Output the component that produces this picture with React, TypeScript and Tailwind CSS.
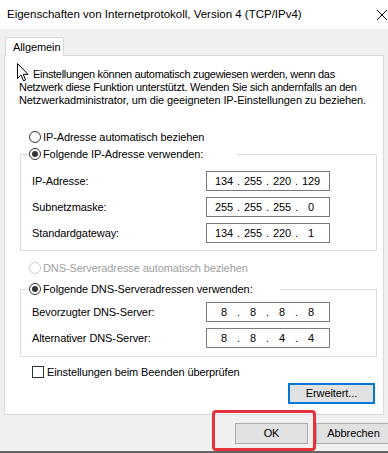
import React from 'react';

const Radio: React.FC<{ checked?: boolean; disabled?: boolean }> = ({ checked, disabled }) => (
  <span
    className={`flex h-[12px] w-[12px] shrink-0 items-center justify-center rounded-full border bg-white ${
      disabled ? 'border-[#cccccc]' : 'border-[#333333]'
    }`}
  >
    {checked && <span className="h-[6px] w-[6px] rounded-full bg-[#333333]" />}
  </span>
);

const IpBox: React.FC<{ parts: string[] }> = ({ parts }) => (
  <div className="flex h-[20px] w-[124px] items-center border border-[#7a7a7a] bg-white pl-[7px]">
    {parts.map((p, i) => (
      <React.Fragment key={i}>
        {i > 0 && <span className="w-[9px] text-center">.</span>}
        <span className="w-[20px] text-center">{p}</span>
      </React.Fragment>
    ))}
  </div>
);

const FieldRow: React.FC<{ label: string; parts: string[] }> = ({ label, parts }) => (
  <div className="flex items-center">
    <span className="w-[174px]">{label}</span>
    <IpBox parts={parts} />
  </div>
);

const Cursor = () => (
  <svg width="12" height="19" viewBox="0 0 12 19" className="absolute left-[12px] top-[7px]">
    <path d="M0.5 0.5 L0.5 15.5 L4 12 L6.5 17.8 L8.6 16.9 L6.2 11.3 L11 11.3 Z" fill="#fff" stroke="#000" strokeWidth="1" strokeLinejoin="miter" />
  </svg>
);

const App: React.FC = () => {
  return (
    <div className="relative flex h-[453px] w-[388px] flex-col overflow-hidden border-b-2 border-[#636363] bg-[#f0f0f0] font-['Liberation_Sans',Arial,sans-serif] text-[11px] leading-[13px] tracking-[-0.1px] text-black">
      {/* Title bar */}
      <div className="flex h-[29px] shrink-0 items-center bg-white pl-[7px] pr-[1px]">
        <span className="text-[11.5px] tracking-[0px]">
          Eigenschaften von Internetprotokoll, Version 4 (TCP/IPv4)
        </span>
        <svg width="10" height="10" viewBox="0 0 10 10" className="ml-auto">
          <path d="M0 0 L10 10 M10 0 L0 10" stroke="#000" strokeWidth="1" />
        </svg>
      </div>

      {/* Tabs + panel */}
      <div className="px-[4px] pt-[8px]">
        <div className="relative z-10 -mb-px ml-px flex h-[19px] w-[59px] items-center border border-b-0 border-[#d9d9d9] bg-white pl-[7px]">
          Allgemein
        </div>
        <div className="relative h-[360px] border border-[#d9d9d9] bg-white pl-[14px] pt-[12px]">
          <Cursor />
          <p className="indent-[14px]">
            <span className="tracking-[-0.32px]">Einstellungen können automatisch zugewiesen werden, wenn das</span>
            <br />
            <span className="tracking-[-0.27px]">Netzwerk diese Funktion unterstützt. Wenden Sie sich andernfalls an den</span>
            <br />
            Netzwerkadministrator, um die geeigneten IP-Einstellungen zu beziehen.
          </p>

          <div className="ml-[10px] mt-[24px] flex h-[12px] items-center gap-[2px]">
            <Radio />
            <span>IP-Adresse automatisch beziehen</span>
          </div>

          <fieldset className="ml-px mt-[5px] w-[357px] border border-[#dcdcdc]">
            <legend className="ml-[8px] flex h-[12px] w-[208px] items-center gap-[2px] bg-white">
              <Radio checked />
              <span>Folgende IP-Adresse verwenden:</span>
            </legend>
            <div className="flex flex-col gap-[6px] pb-[7px] pl-[11px] pt-[11px]">
              <FieldRow label="IP-Adresse:" parts={['134', '255', '220', '129']} />
              <FieldRow label="Subnetzmaske:" parts={['255', '255', '255', '0']} />
              <FieldRow label="Standardgateway:" parts={['134', '255', '220', '1']} />
            </div>
          </fieldset>

          <div className="ml-[10px] mt-[11px] flex h-[12px] items-center gap-[2px] text-[#a0a0a0]">
            <Radio disabled />
            <span>DNS-Serveradresse automatisch beziehen</span>
          </div>

          <fieldset className="ml-px mt-[9px] w-[357px] border border-[#dcdcdc]">
            <legend className="ml-[8px] flex h-[12px] w-[251px] items-center gap-[2px] bg-white">
              <Radio checked />
              <span>Folgende DNS-Serveradressen verwenden:</span>
            </legend>
            <div className="flex flex-col gap-[6px] pb-[8px] pl-[11px] pt-[7px]">
              <FieldRow label="Bevorzugter DNS-Server:" parts={['8', '8', '8', '8']} />
              <FieldRow label="Alternativer DNS-Server:" parts={['8', '8', '4', '4']} />
            </div>
          </fieldset>

          <div className="ml-[13px] mt-[9px] flex h-[12px] items-center gap-[3px]">
            <span className="h-[12px] w-[12px] border border-[#333333] bg-white" />
            <span>Einstellungen beim Beenden überprüfen</span>
          </div>

          <div className="mt-[5px] flex">
            <button className="ml-[269px] flex h-[21px] w-[87px] shrink-0 items-center justify-center border-2 border-[#0078d7] bg-[#e1e1e1]">
              Erweitert...
            </button>
          </div>
        </div>
      </div>

      {/* Dialog buttons */}
      <div className="mt-[8px] flex gap-[8px] pl-[235px]">
        <button className="flex h-[21px] w-[73px] shrink-0 items-center justify-center border border-[#adadad] bg-[#e1e1e1]">
          OK
        </button>
        <button className="flex h-[21px] w-[75px] shrink-0 items-center justify-center border border-[#adadad] bg-[#e1e1e1]">
          Abbrechen
        </button>
      </div>

      {/* annotation */}
      <div className="absolute left-[212px] top-[410px] h-[41px] w-[104px] rounded-[4px] border-[3px] border-[#e5333d]" />
    </div>
  );
};

export default App;
